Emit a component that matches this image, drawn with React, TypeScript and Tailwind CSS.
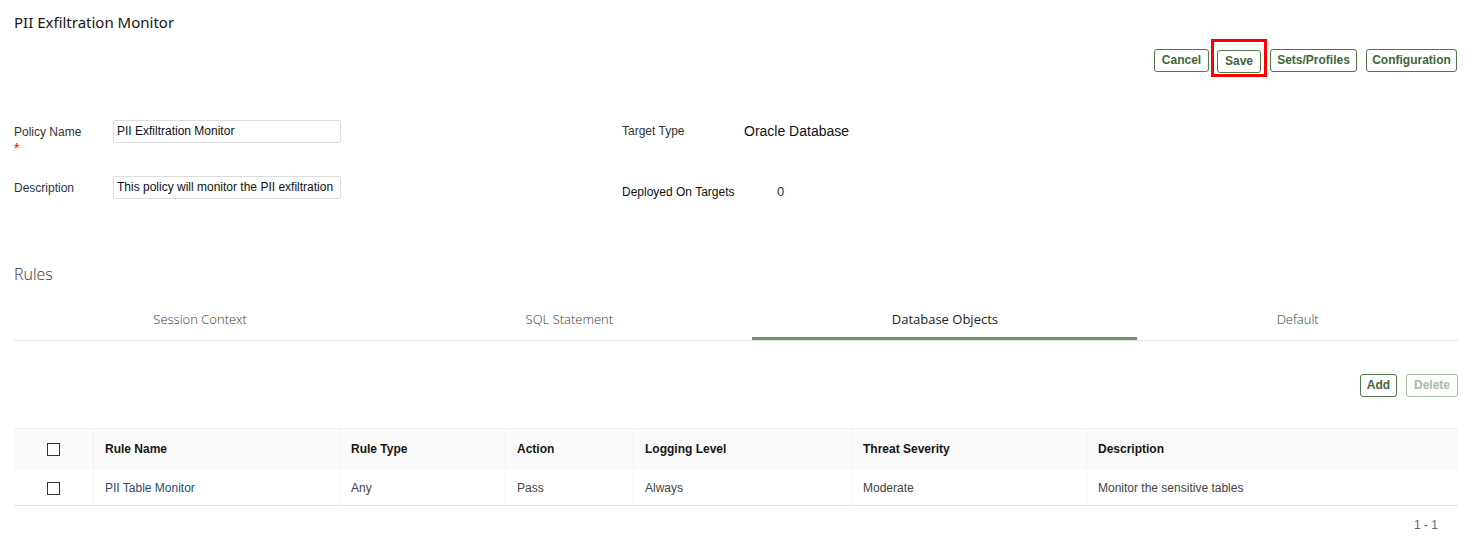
import React from "react";

const btn =
  "h-[23px] px-0 rounded-[3px] border border-[#4d7a45] bg-white text-[12px] font-bold text-[#3f6637] leading-none";

function Checkbox() {
  return <div className="w-[13px] h-[13px] border border-[#333] bg-white mx-auto" />;
}

export default function App() {
  const cols = [
    { w: "w-[79px]", label: "" },
    { w: "w-[246px]", label: "Rule Name" },
    { w: "w-[166px]", label: "Rule Type" },
    { w: "w-[128px]", label: "Action" },
    { w: "w-[218px]", label: "Logging Level" },
    { w: "w-[235px]", label: "Threat Severity" },
    { w: "flex-1", label: "Description" },
  ];
  const row = ["", "PII Table Monitor", "Any", "Pass", "Always", "Moderate", "Monitor the sensitive tables"];
  return (
    <div className="w-[1476px] h-[550px] bg-white pl-[14px] pr-[18px] overflow-hidden" style={{ fontFamily: '"Liberation Sans", Arial, sans-serif' }}>
      <div className="pt-[12px] text-[15px] text-[#161513] leading-[20px]" style={{ fontFamily: '"Noto Sans", sans-serif' }}>
        PII Exfiltration Monitor
      </div>
      <div className="flex justify-end items-center mt-[16px] pr-[1px]">
        <button className={btn + " w-[55px]"}>Cancel</button>
        <div className="relative ml-[8px]">
          <div className="absolute -left-[6px] -top-[9px] w-[56px] h-[38px] border-[3px] border-[#ff0000]" />
          <button className={btn + " w-[44px]"}>Save</button>
        </div>
        <button className={btn + " w-[87px] ml-[9px]"}>Sets/Profiles</button>
        <button className={btn + " w-[91px] ml-[9px]"}>Configuration</button>
      </div>

      <div className="flex mt-[47px]">
        <div className="w-[608px]">
          <div className="flex items-start">
            <div className="w-[99px] pt-[5px] text-[12px] text-[#333] leading-[14px]">
              Policy Name
              <div className="text-[#e00] text-[14px] leading-[14px] mt-[2px]">*</div>
            </div>
            <input
              readOnly
              value="PII Exfiltration Monitor"
              className="w-[228px] h-[23px] border border-[#ddd] rounded-[2px] px-[3px] text-[12px] text-[#111] outline-none"
            />
          </div>
          <div className="flex items-start mt-[21px]">
            <div className="w-[99px] pt-[5px] text-[12px] text-[#333] leading-[14px]">Description</div>
            <input
              readOnly
              value="This policy will monitor the PII exfiltration"
              className="w-[228px] h-[23px] border border-[#ddd] rounded-[2px] px-[3px] text-[12px] text-[#111] outline-none"
            />
          </div>
        </div>
        <div className="flex-1">
          <div className="flex items-center h-[23px]">
            <div className="w-[122px] text-[12px] text-[#333]">Target Type</div>
            <div className="text-[14px] text-[#111]">Oracle Database</div>
          </div>
          <div className="flex items-center mt-[38px] h-[23px]">
            <div className="w-[155px] text-[12px] text-[#111]">Deployed On Targets</div>
            <div className="text-[13px] text-[#333]">0</div>
          </div>
        </div>
      </div>

      <div className="mt-[60px] text-[16px] font-light text-[#333] leading-[20px]" style={{ fontFamily: '"Open Sans", sans-serif' }}>
        Rules
      </div>

      <div className="flex mt-[17px] border-b border-[#e6e6e6]" style={{ fontFamily: '"Open Sans", sans-serif' }}>
        {["Session Context", "SQL Statement", "Database Objects", "Default"].map((t, i) => (
          <div
            key={t}
            className={
              "flex-auto text-center text-[13px] h-[39px] leading-[37px] " +
              (i === 2 ? "text-[#222] border-b-[3px] border-[#6b9a5e] -mb-px" : "text-[#3a3a3a] font-light")
            }
          >
            {t}
          </div>
        ))}
      </div>

      <div className="flex justify-end gap-[9px] mt-[33px]">
        <button className={btn + " w-[37px]"}>Add</button>
        <button className="h-[23px] w-[52px] rounded-[3px] border border-[#a9c2a4] bg-white text-[12px] font-bold text-[#a8bba5] leading-none">
          Delete
        </button>
      </div>

      <div className="mt-[31px] border-t border-[#f0f0f0] border-b border-b-[#e3e3e3]">
        <div className="flex h-[41px] bg-[#fafafa]">
          {cols.map((c, i) => (
            <div
              key={i}
              className={c.w + " flex items-center text-[12px] font-bold text-[#161513] " + (i > 0 ? "border-l border-[#f0f0f0] pl-[11px]" : "")}
            >
              {i === 0 ? <Checkbox /> : c.label}
            </div>
          ))}
        </div>
        <div className="flex h-[35px] pt-[2px]">
          {cols.map((c, i) => (
            <div
              key={i}
              className={
                c.w +
                " flex items-center text-[12px] " +
                (i === 1 ? "text-[#2d4c6b] " : "text-[#444] ") +
                (i > 0 ? "border-l border-[#f5f5f5] pl-[11px]" : "")
              }
            >
              {i === 0 ? <Checkbox /> : row[i]}
            </div>
          ))}
        </div>
      </div>
      <div className="flex justify-end pr-[20px] mt-[10px] text-[12px] text-[#666]">1 - 1</div>
    </div>
  );
}
